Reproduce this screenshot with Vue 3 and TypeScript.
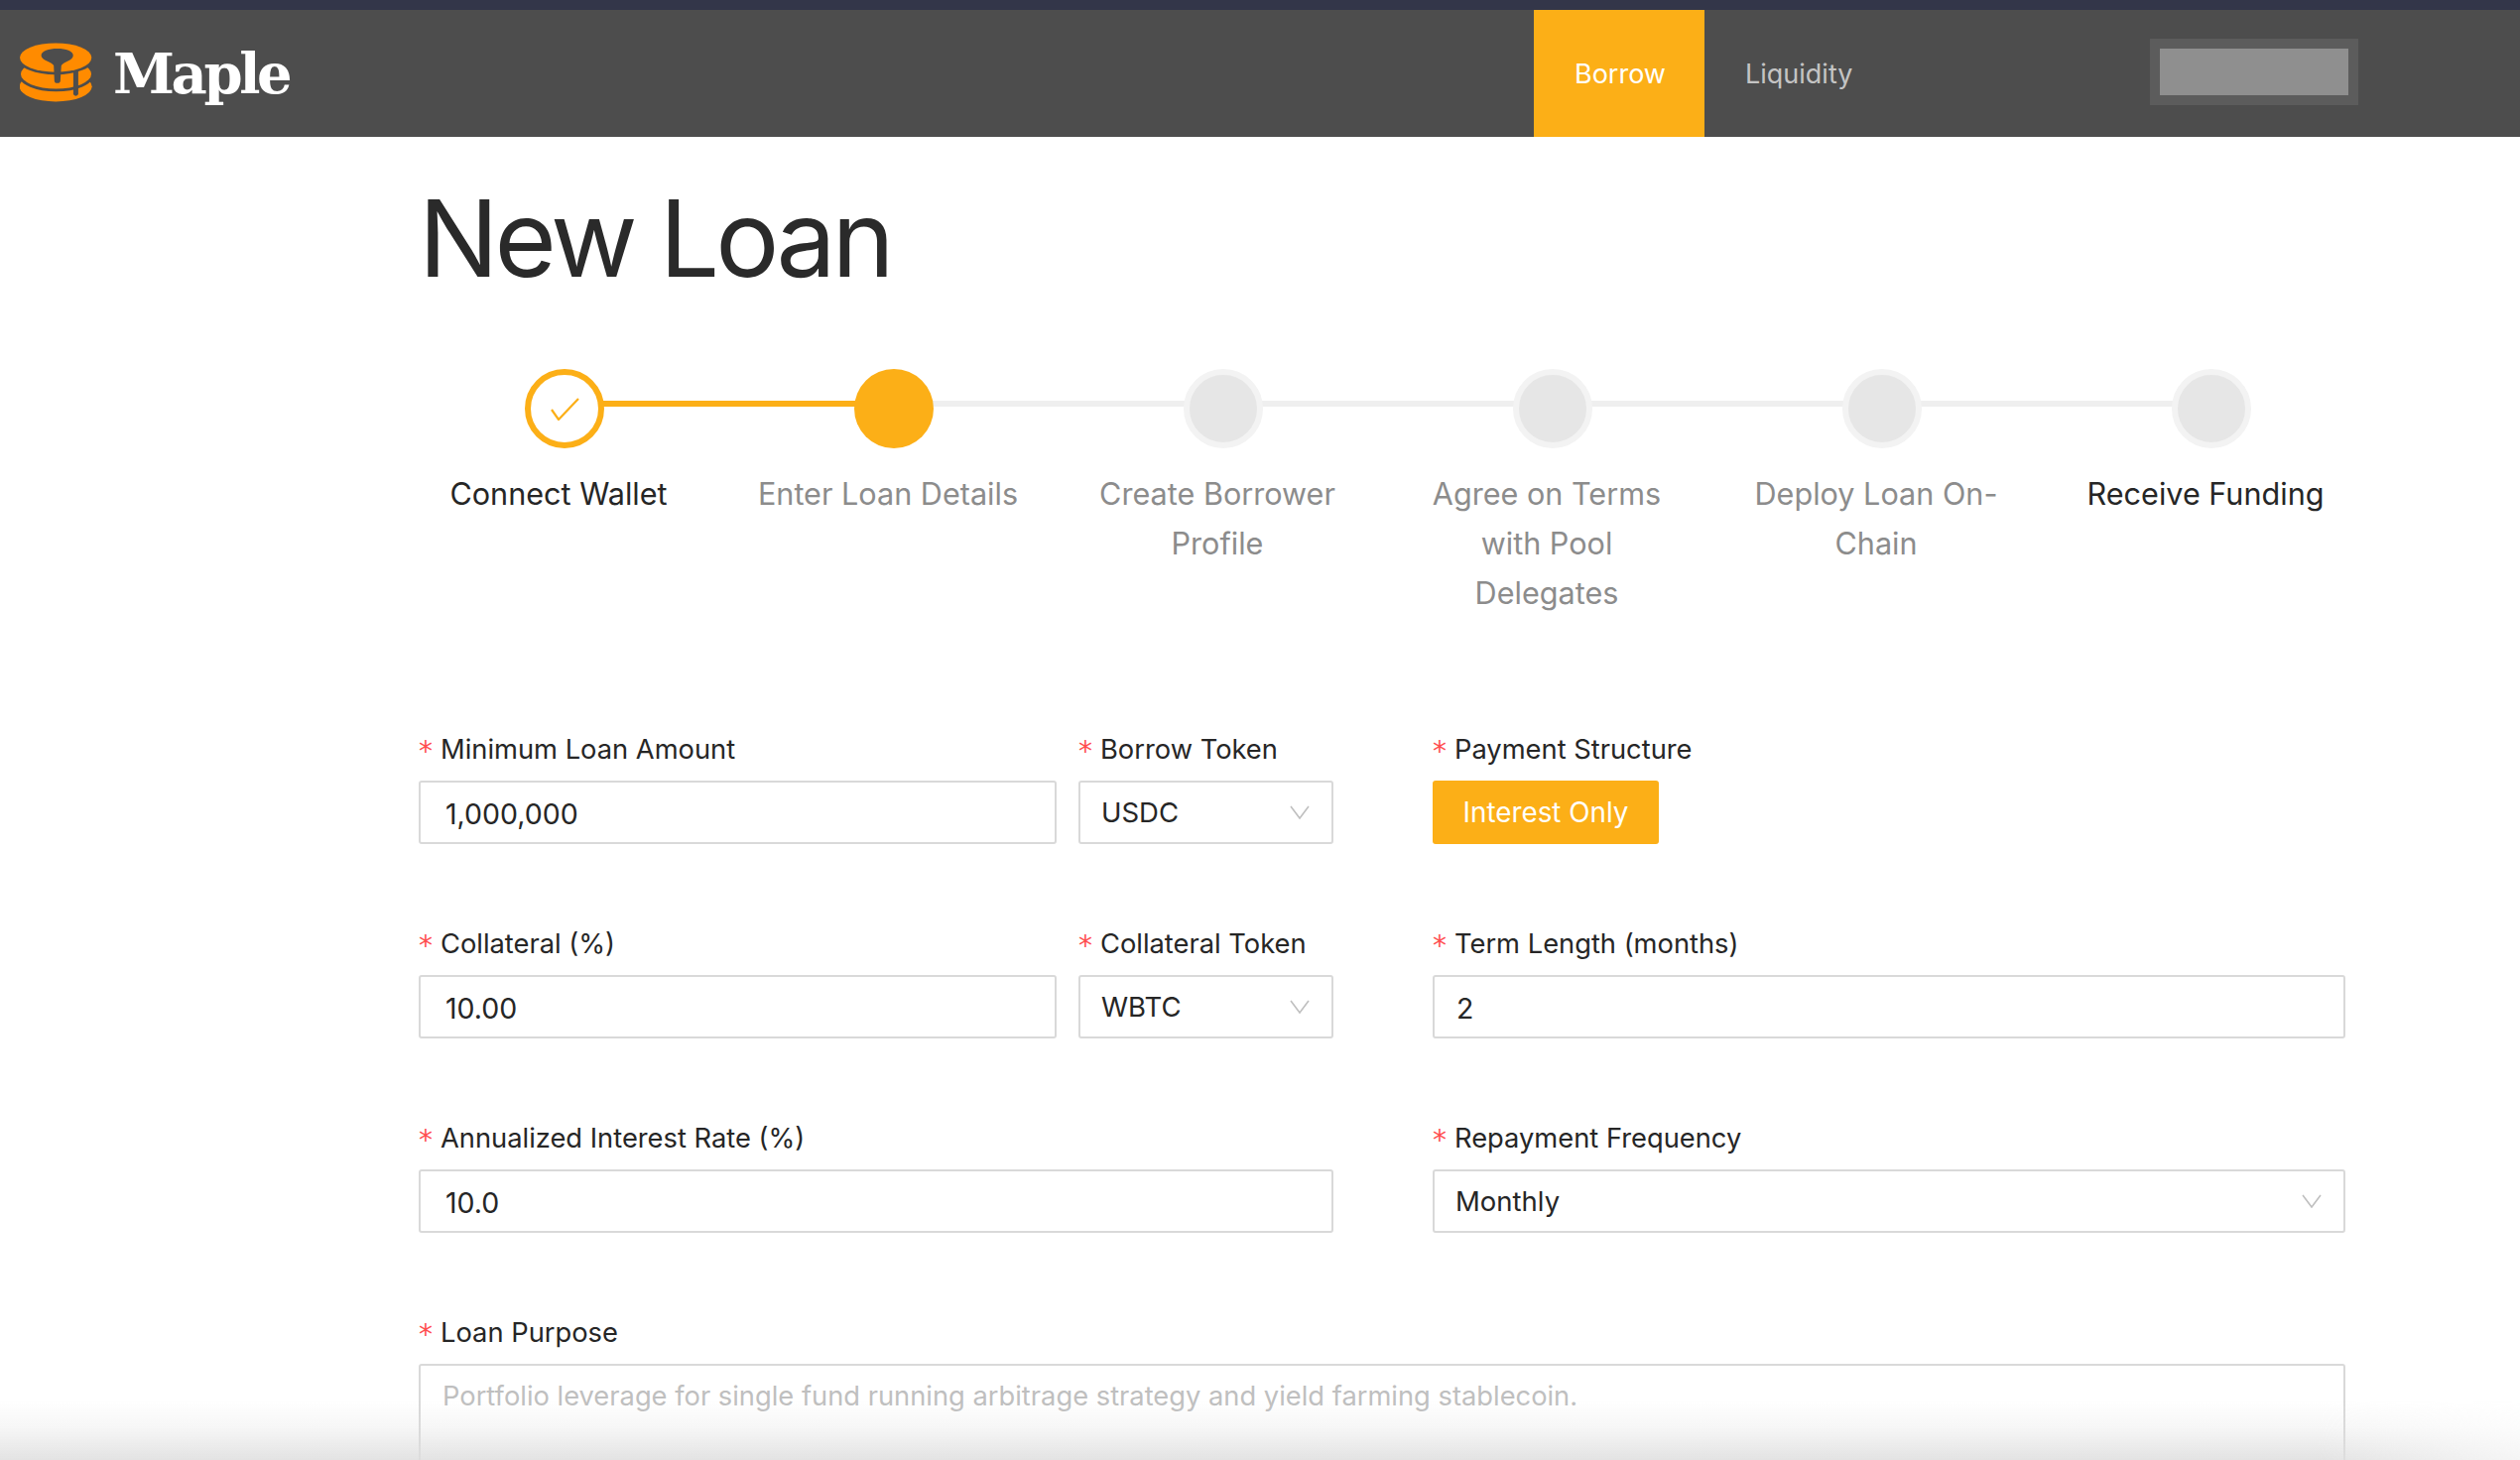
<script setup lang="ts">
interface Step { label: string; state: 'done' | 'current' | 'todo' | 'last' }
const steps: Step[] = [
  { label: 'Connect Wallet', state: 'done' },
  { label: 'Enter Loan Details', state: 'current' },
  { label: 'Create Borrower Profile', state: 'todo' },
  { label: 'Agree on Terms with Pool Delegates', state: 'todo' },
  { label: 'Deploy Loan On-Chain', state: 'todo' },
  { label: 'Receive Funding', state: 'last' },
]
</script>

<template>
  <div class="page">
    <div class="topstrip"></div>
    <header class="header">
      <div class="brand">
        <svg class="logo" viewBox="30 28 220 178" width="73" height="60">
          <ellipse cx="139" cy="160" rx="110" ry="46" fill="#ff8b00"/>
          <ellipse cx="140" cy="122" rx="107" ry="45" fill="#ff8b00" stroke="#4d4d4d" stroke-width="16" paint-order="stroke"/>
          <path d="M200 110 V181" fill="none" stroke="#4d4d4d" stroke-width="15" stroke-linecap="round"/>
          <ellipse cx="139" cy="72" rx="109" ry="44" fill="#ff8b00" stroke="#4d4d4d" stroke-width="16" paint-order="stroke"/>
          <path d="M95 66C95 52 118 45 144 45C170 45 192 52 192 66C192 80 166 84 156 96L153 143C152 152 136 152 135 143L133 96C124 84 95 80 95 66Z" fill="#4d4d4d"/>
        </svg>
        <span class="wordmark">Maple</span>
      </div>
      <nav class="nav">
        <a class="tab active">Borrow</a>
        <a class="tab">Liquidity</a>
      </nav>
      <div class="wallet"><div class="wallet-blur"></div></div>
    </header>

    <main class="main">
      <h1 class="title">New Loan</h1>

      <ol class="steps">
        <li v-for="(s, i) in steps" :key="s.label" class="step" :class="s.state">
          <div class="track">
            <span v-if="i < steps.length - 1" class="line" :class="{ on: i === 0 }"></span>
            <span class="dot">
              <svg v-if="s.state === 'done'" viewBox="0 0 29 23" width="29" height="23">
                <path d="M1 12 L8 22 L28 1" fill="none" stroke="#fcaf17" stroke-width="2.2"/>
              </svg>
            </span>
          </div>
          <div class="step-label">{{ s.label }}</div>
        </li>
      </ol>

      <form class="form">
        <div class="field f-main">
          <label class="lbl"><i>*</i>Minimum Loan Amount</label>
          <div class="ctl input">1,000,000</div>
        </div>
        <div class="field f-token">
          <label class="lbl"><i>*</i>Borrow Token</label>
          <div class="ctl select"><span>USDC</span><svg class="chev" viewBox="0 0 20 14"><path d="M1 1 L10 13 L19 1" fill="none" stroke="#bfbfbf" stroke-width="1.6"/></svg></div>
        </div>
        <div class="field f-right">
          <label class="lbl"><i>*</i>Payment Structure</label>
          <div><button type="button" class="btn">Interest Only</button></div>
        </div>

        <div class="field f-main">
          <label class="lbl"><i>*</i>Collateral (%)</label>
          <div class="ctl input">10.00</div>
        </div>
        <div class="field f-token">
          <label class="lbl"><i>*</i>Collateral Token</label>
          <div class="ctl select"><span>WBTC</span><svg class="chev" viewBox="0 0 20 14"><path d="M1 1 L10 13 L19 1" fill="none" stroke="#bfbfbf" stroke-width="1.6"/></svg></div>
        </div>
        <div class="field f-right">
          <label class="lbl"><i>*</i>Term Length (months)</label>
          <div class="ctl input">2</div>
        </div>

        <div class="field f-wide">
          <label class="lbl"><i>*</i>Annualized Interest Rate (%)</label>
          <div class="ctl input">10.0</div>
        </div>
        <div class="field f-right">
          <label class="lbl"><i>*</i>Repayment Frequency</label>
          <div class="ctl select"><span>Monthly</span><svg class="chev" viewBox="0 0 20 14"><path d="M1 1 L10 13 L19 1" fill="none" stroke="#bfbfbf" stroke-width="1.6"/></svg></div>
        </div>

        <div class="field f-full">
          <label class="lbl"><i>*</i>Loan Purpose</label>
          <div class="ctl area">Portfolio leverage for single fund running arbitrage strategy and yield farming stablecoin.</div>
        </div>
      </form>
    </main>
    <div class="fade"></div>
  </div>
</template>

<style>
html, body { margin: 0; background: #fff; overflow: hidden; }
</style>

<style scoped>
.page {
  position: relative;
  width: 2540px;
  height: 1472px;
  overflow: hidden;
  background: #fff;
  font-family: Inter, "Liberation Sans", sans-serif;
  color: #262626;
}
.topstrip { height: 10px; background: #333649; }
.header {
  height: 128px;
  background: #4d4d4d;
  display: flex;
  align-items: stretch;
}
.brand {
  display: flex;
  align-items: center;
  gap: 21px;
  padding-left: 20px;
  width: 1546px;
  flex: none;
  box-sizing: border-box;
}
.logo { flex: none; margin-top: -2px; }
.wordmark {
  font-family: "DejaVu Serif", serif;
  font-weight: 700;
  font-size: 56px;
  letter-spacing: -3.4px;
  color: #fff;
  line-height: 1;
}
.nav { display: flex; width: 621px; flex: none; }
.tab {
  display: flex;
  align-items: center;
  justify-content: center;
  font-size: 27px;
  color: #c4c4c4;
  padding: 0 39px 0 41px;
}
.tab.active { background: #fcaf17; color: #fff; }
.wallet {
  flex: none;
  align-self: flex-start;
  margin-top: 29px;
  width: 210px;
  height: 67px;
  background: #5c5c5c;
  display: flex;
  align-items: center;
  justify-content: center;
}
.wallet-blur { width: 190px; height: 47px; background: #8f8f8f; }

.main { padding-left: 422px; width: 2364px; box-sizing: border-box; }
.title {
  margin: 38px 0 0;
  font-size: 107px;
  line-height: 128px;
  font-weight: 400;
  letter-spacing: -4px;
  color: #2a2a2a;
}
.steps {
  list-style: none;
  margin: 68px 0 0 -25px;
  padding: 0;
  display: flex;
}
.step { width: 332px; flex: none; text-align: center; }
.track { position: relative; height: 80px; display: flex; justify-content: center; }
.line {
  position: absolute;
  left: calc(50% + 6px);
  width: 332px;
  top: 32px;
  height: 6px;
  background: #efefef;
}
.line.on { background: #fcaf17; }
.dot {
  position: relative;
  box-sizing: border-box;
  width: 80px;
  height: 80px;
  margin-left: 12px;
  border-radius: 50%;
  background: #e6e6e6;
  border: 6px solid #f3f3f3;
  display: flex;
  align-items: center;
  justify-content: center;
}
.done .dot { background: #fff; border: 6px solid #fcaf17; }
.current .dot { background: #fcaf17; border: 0; }
.step-label {
  margin: 21px auto 0;
  width: 270px;
  font-size: 30.6px;
  line-height: 50px;
  color: #8c8c8c;
}
.done .step-label, .last .step-label { color: #262626; }

.form {
  margin-top: 107px;
  display: grid;
  grid-template-columns: 643px 257px 1fr;
  column-gap: 22px;
}
.f-main { grid-column: 1; }
.f-token { grid-column: 2; }
.f-right { grid-column: 3; margin-left: 78px; }
.f-wide { grid-column: 1 / span 2; }
.f-full { grid-column: 1 / -1; }
.field { height: 196px; }
.lbl {
  display: block;
  height: 50px;
  line-height: 52px;
  font-size: 27.3px;
  margin-bottom: 7px;
  color: #262626;
}
.lbl i {
  display: inline-block;
  width: 22px;
  font-style: normal;
  color: #ff4d4f;
  font-size: 28px;
  vertical-align: -2px;
  font-family: "DejaVu Sans", sans-serif;
}
.ctl {
  box-sizing: border-box;
  height: 64px;
  border: 2px solid #d9d9d9;
  border-radius: 3px;
  background: #fff;
  display: flex;
  align-items: center;
  font-size: 28.5px;
  color: #262626;
}
.input { padding: 2px 0 0 25px; }
.f-right .input { padding-left: 22px; }
.select { padding: 0 22px 0 21px; justify-content: space-between; font-size: 27.5px; }
.chev { width: 20px; height: 14px; flex: none; }
.area {
  height: 200px;
  align-items: flex-start;
  padding: 14px 22px;
  font-size: 27.3px;
  color: #bfbfbf;
}
.btn {
  display: block;
  width: 228px;
  height: 64px;
  border: 0;
  border-radius: 3px;
  background: #fcaf17;
  color: #fff;
  font: inherit;
  font-size: 27.8px;
  padding: 0;
}
.fade {
  position: absolute;
  left: 0;
  right: 0;
  bottom: 0;
  height: 60px;
  pointer-events: none;
  background: linear-gradient(to bottom, rgba(222,222,222,0), rgba(222,222,222,.25) 45%, rgba(222,222,222,.85));
  -webkit-mask-image: linear-gradient(to right, #000 92%, rgba(0,0,0,.35) 100%);
  mask-image: linear-gradient(to right, #000 92%, rgba(0,0,0,.35) 100%);
}
</style>
